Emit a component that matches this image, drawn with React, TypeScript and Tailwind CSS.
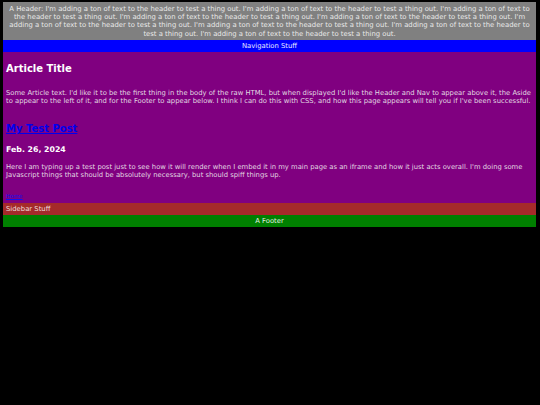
export default function App() {
  const phrase = "I'm adding a ton of text to the header to test a thing out.";
  const headerText = "A Header: " + Array(9).fill(phrase).join(" ");

  return (
    <div className="min-h-screen bg-black pl-[3px] pr-[4px] pt-[2px] font-['DejaVu_Sans',Verdana,sans-serif]">
      {/* Header */}
      <header className="bg-[#808080] px-[3px] pt-[3px] pb-[2px] text-center text-[6.85px] leading-[8.2px] text-[#e8e8e8]">
        {headerText}
      </header>

      {/* Nav */}
      <nav className="flex h-[12px] items-center justify-center bg-[#0000ff] text-[6.85px] text-[#e8e8ff]">
        Navigation Stuff
      </nav>

      {/* Main */}
      <main className="h-[151px] bg-[#800080] pl-[3px] pr-0 text-[#e0d8e0]">
        <article>
          <h1 className="pt-[10px] text-[10px] font-bold leading-[13px] text-white">Article Title</h1>
          <p className="mt-[14px] text-[6.8px] leading-[8.2px]">
            Some Article text. I'd like it to be the first thing in the body of the raw HTML, but when displayed I'd like the Header and Nav to appear above it, the Aside to appear to the left of it, and for the Footer to appear below. I think I can do this with CSS, and how this page appears will tell you if I've been successful.
          </p>
        </article>
        <section>
          <h2 className="mt-[18px] text-[10px] font-bold leading-[12px]">
            <a href="#" className="text-[#0000ee] underline">My Test Post</a>
          </h2>
          <h3 className="mt-[10px] text-[7.8px] font-bold leading-[10px] text-white">Feb. 26, 2024</h3>
          <p className="mt-[8px] text-[6.8px] leading-[8.2px]">
            Here I am typing up a test post just to see how it will render when I embed it in my main page as an iframe and how it just acts overall. I'm doing some Javascript things that should be absolutely necessary, but should spiff things up.
          </p>
        </section>
        <a href="#" className="mt-[13px] block text-[5.6px] leading-[7px] text-[#1010f0] underline">
          Home
        </a>
      </main>

      {/* Aside */}
      <aside className="flex h-[12px] items-center bg-[#a52a2a] px-[3px] text-[6.85px] text-[#eedddd]">
        Sidebar Stuff
      </aside>

      {/* Footer */}
      <footer className="flex h-[12px] items-center justify-center bg-[#008000] text-[6.85px] text-[#e0f0e0]">
        A Footer
      </footer>
    </div>
  );
}
